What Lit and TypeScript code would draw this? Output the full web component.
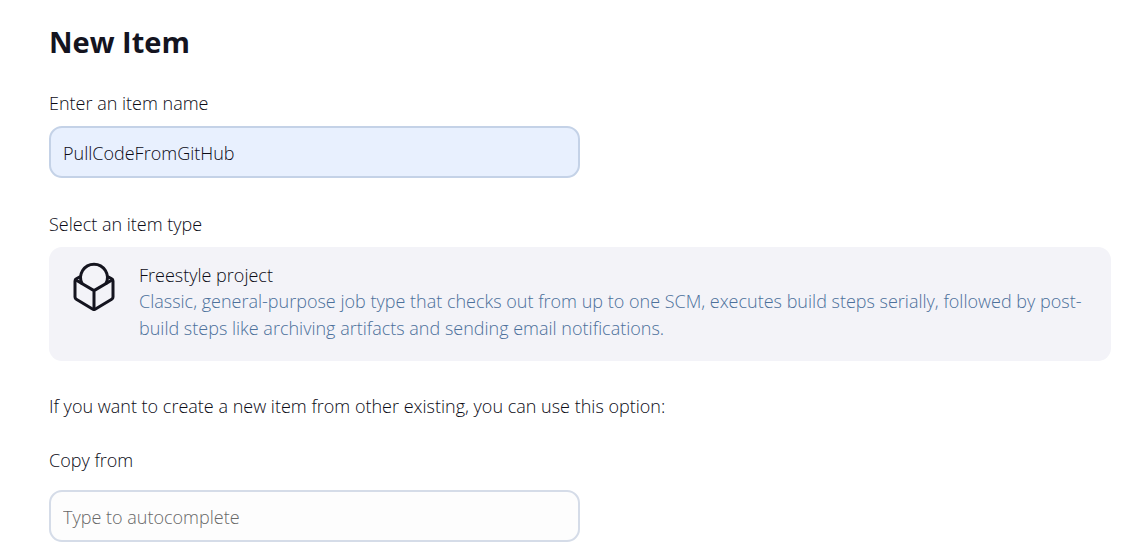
import { LitElement, html, css } from "lit";
import { customElement, state } from "lit/decorators.js";

@customElement("app-root")
export class AppRoot extends LitElement {
  @state() private itemName = "PullCodeFromGitHub";
  @state() private copyFrom = "";

  static styles = css`
    :host {
      display: block;
      box-sizing: border-box;
      padding: 20px 29px 4px 49px;
      background: #fff;
      color: #0b0b16;
      font-family: "Open Sans", "Noto Sans", sans-serif;
      font-size: 18px;
      font-weight: 300;
      line-height: 26px;
    }
    h1 {
      margin: 0 0 26px;
      color: #14141f;
      font-size: 29px;
      font-weight: 700;
      line-height: 44px;
    }
    form,
    .field {
      display: flex;
      flex-direction: column;
    }
    .field {
      gap: 10px;
      margin-bottom: 33px;
    }
    .field.last {
      gap: 17px;
      margin-bottom: 0;
    }
    .types {
      display: flex;
      flex-direction: column;
      margin: 0 0 32px;
      padding: 0;
      border: 0;
      min-width: 0;
    }
    legend {
      padding: 0;
      margin-bottom: 10px;
    }
    .text {
      box-sizing: border-box;
      width: 50%;
      min-width: 240px;
      max-width: 531px;
      height: 52px;
      padding: 2px 12px 0;
      border: 2px solid #d5dce8;
      border-radius: 13px;
      background: #fdfdfd;
      color: #0b0b16;
      font: inherit;
      outline: none;
    }
    .text.filled {
      border-color: #c4d2e7;
      background: #e8f0fe;
    }
    .text::placeholder {
      color: #686868;
      opacity: 1;
    }
    .type {
      display: flex;
      align-items: flex-start;
      gap: 20px;
      padding: 15px 20px 19px;
      border: 0;
      border-radius: 13px;
      background: #f3f3f8;
      color: inherit;
      font: inherit;
      text-align: left;
      cursor: pointer;
    }
    .icon {
      flex: none;
      width: 50px;
      height: 50px;
    }
    .name,
    .desc {
      display: block;
    }
    .desc {
      color: #4c709b;
      line-height: 27px;
    }
    .hint {
      margin: 0 0 28px;
    }
  `;

  render() {
    return html`
      <main>
        <h1>New Item</h1>
        <form @submit=${(e: Event) => e.preventDefault()}>
          <div class="field">
            <label for="name">Enter an item name</label>
            <input
              id="name"
              class="text ${this.itemName ? "filled" : ""}"
              type="text"
              autocomplete="off"
              spellcheck="false"
              .value=${this.itemName}
              @input=${(e: Event) => (this.itemName = (e.target as HTMLInputElement).value)}
            />
          </div>
          <fieldset class="types">
            <legend>Select an item type</legend>
            <button class="type" type="button">
              <svg class="icon" viewBox="0 0 50 50" fill="none" stroke="#14141f" stroke-width="3" stroke-linejoin="round" stroke-linecap="round" aria-hidden="true">
                <path d="M13 21.500A13.400 13.400 0 1 1 37 21.500" />
                <path d="M10.5 15L7.3 16.800Q6 17.600 6 19V35Q6 36.500 7.300 37.300L23.500 47Q25 47.900 26.500 47L42.700 37.300Q44 36.500 44 35V19Q44 17.600 42.700 16.800L39.500 15" />
                <path d="M6.500 17.800L25 28.600L43.500 17.800M25 28.600V47.500" />
              </svg>
              <span>
                <span class="name">Freestyle project</span>
                <span class="desc">Classic, general-purpose job type that checks out from up to one SCM, executes build steps serially, followed by post-<wbr />build steps like archiving artifacts and sending email notifications.</span>
              </span>
            </button>
          </fieldset>
          <p class="hint">If you want to create a new item from other existing, you can use this option:</p>
          <div class="field last">
            <label for="from">Copy from</label>
            <input
              id="from"
              class="text"
              type="text"
              autocomplete="off"
              placeholder="Type to autocomplete"
              .value=${this.copyFrom}
              @input=${(e: Event) => (this.copyFrom = (e.target as HTMLInputElement).value)}
            />
          </div>
        </form>
      </main>
    `;
  }
}
